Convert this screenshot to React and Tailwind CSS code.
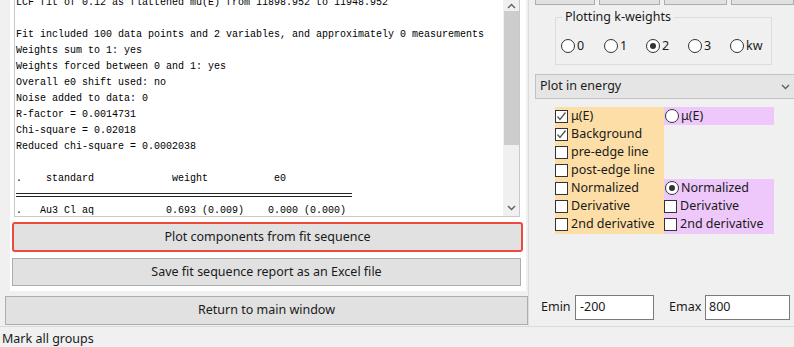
import React from 'react';

const ui = { fontFamily: '"Noto Sans", "Liberation Sans", sans-serif' };
const mono = { fontFamily: '"Liberation Mono", "DejaVu Sans Mono", monospace' };

const reportLines = [
  'LCF fit of 0.12 as flattened mu(E) from 11898.952 to 11948.952',
  '',
  'Fit included 100 data points and 2 variables, and approximately 0 measurements',
  'Weights sum to 1: yes',
  'Weights forced between 0 and 1: yes',
  'Overall e0 shift used: no',
  'Noise added to data: 0',
  'R-factor = 0.0014731',
  'Chi-square = 0.02018',
  'Reduced chi-square = 0.0002038',
  '',
  '.    standard             weight           e0',
];

function Chevron({ up = false }) {
  return (
    <svg width="9" height="6" viewBox="0 0 9 6" className="text-[#606060]">
      <path
        d={up ? 'M1 5 L4.5 1.5 L8 5' : 'M1 1 L4.5 4.5 L8 1'}
        fill="none"
        stroke="currentColor"
        strokeWidth="1.4"
      />
    </svg>
  );
}

function Radio({ checked, label }) {
  return (
    <div className="flex items-center gap-[2px]">
      <span className="flex h-[14px] w-[14px] items-center justify-center rounded-full border border-[#333] bg-white">
        {checked && <span className="h-[6px] w-[6px] rounded-full bg-[#333]" />}
      </span>
      <span>{label}</span>
    </div>
  );
}

function Check({ checked, label }) {
  return (
    <div className="flex h-[18px] items-center gap-[3px]">
      <span className="flex h-[13px] w-[13px] items-center justify-center border border-[#333] bg-white">
        {checked && (
          <svg width="11" height="11" viewBox="0 0 11 11">
            <path d="M1.5 5.5 L4 8.5 L9.5 1.5" fill="none" stroke="#555" strokeWidth="1.3" />
          </svg>
        )}
      </span>
      <span>{label}</span>
    </div>
  );
}

function ReportBox() {
  return (
    <div className="relative ml-[4px] flex h-[217px] w-[506px] border-x border-b border-[#c8c8c8] bg-white">
      <div className="flex-1 overflow-hidden text-[10px] leading-[16px] text-black" style={mono}>
        <div className="mt-[-5px] pl-[1px] whitespace-pre">
          {reportLines.map((l, i) => (
            <div key={i} className="h-[16px]">{l}</div>
          ))}
          <div className="flex h-[16px] flex-col justify-center gap-[2px]">
            <div className="h-px w-[336px] bg-[#222]" />
            <div className="h-px w-[336px] bg-[#222]" />
          </div>
          <div className="h-[16px]">{'.   Au3 Cl aq            0.693 (0.009)    0.000 (0.000)'}</div>
        </div>
      </div>
      <div className="flex w-[16px] flex-col items-center bg-[#f0f0f0]">
        <div className="flex h-[11px] items-center"><Chevron up /></div>
        <div className="h-[134px] w-[15px] bg-[#cdcdcd]" />
        <div className="flex-1" />
        <div className="flex h-[16px] items-center"><Chevron /></div>
      </div>
    </div>
  );
}

export default function App() {
  return (
    <div className="h-[347px] w-[794px] overflow-hidden bg-[#f0f0f0] text-[12.5px] text-[#1a1a1a]" style={ui}>
      <div className="flex h-[327px] border-b border-[#dadada]">
        {/* left column */}
        <div className="flex w-[530px] flex-col pl-[5px]">
          <div className="ml-[5px] flex h-[291px] w-[516px] flex-col bg-white">
            <ReportBox />
            <button className="ml-[2px] mt-[5px] h-[30px] w-[511px] rounded-[3px] border-2 border-[#ec4a3f] bg-[#e1e1e1] text-center">
              Plot components from fit sequence
            </button>
            <button className="ml-[2px] mt-[6px] h-[28px] w-[509px] border border-[#adadad] bg-[#e1e1e1] text-center">
              Save fit sequence report as an Excel file
            </button>
          </div>
          <button className="mt-[5px] h-[29px] w-[523px] border border-[#adadad] bg-[#e1e1e1] text-center">
            Return to main window
          </button>
        </div>

        {/* right column */}
        <div className="flex flex-1 flex-col border-l border-[#dcdcdc] pl-[6px]">
          <div className="flex h-[5px] gap-[4px]">
            <div className="w-[60px] border-x border-b border-[#adadad] bg-[#e1e1e1]" />
            <div className="w-[61px] border-x border-b border-[#adadad] bg-[#e1e1e1]" />
            <div className="w-[63px] border-x border-b border-[#adadad] bg-[#e1e1e1]" />
            <div className="w-[63px] border-x border-b border-[#adadad] bg-[#e1e1e1]" />
          </div>

          <div className="relative ml-[20px] mt-[12px] h-[48px] w-[217px] border border-[#dcdcdc]">
            <span className="absolute left-[6px] top-[-10px] bg-[#f0f0f0] px-[3px]">Plotting k-weights</span>
            <div className="mt-[19px] flex items-center pl-[5px]">
              <div className="w-[43px]"><Radio label="0" /></div>
              <div className="w-[42px]"><Radio label="1" /></div>
              <div className="w-[42px]"><Radio checked label="2" /></div>
              <div className="w-[42px]"><Radio label="3" /></div>
              <Radio label="kw" />
            </div>
          </div>

          <div className="mr-[-4px] mt-[9px] flex h-[25px] items-center justify-between border border-[#c2c2c2] bg-[#e5e5e5] pl-[4px] pr-[7px]">
            <span>Plot in energy</span>
            <Chevron />
          </div>

          <div className="ml-[20px] mt-[8px] flex w-[219px]">
            <div className="w-[109px] bg-[#fddea6] pb-[1px]">
              <Check checked label="μ(E)" />
              <Check checked label="Background" />
              <Check label="pre-edge line" />
              <Check label="post-edge line" />
              <Check label="Normalized" />
              <Check label="Derivative" />
              <Check label="2nd derivative" />
            </div>
            <div className="flex w-[110px] flex-col">
              <div className="flex h-[18px] items-center bg-[#efc8fb] pl-[1px]">
                <Radio label="μ(E)" />
              </div>
              <div className="h-[54px]" />
              <div className="bg-[#efc8fb] pb-[1px]">
                <div className="flex h-[18px] items-center pl-[1px]"><Radio checked label="Normalized" /></div>
                <Check label="Derivative" />
                <Check label="2nd derivative" />
              </div>
            </div>
          </div>

          <div className="mt-auto mb-[6px] flex items-center">
            <span className="ml-[6px] w-[34px]">Emin</span>
            <div className="flex h-[25px] w-[79px] items-center border border-[#7a7a7a] bg-white pl-[4px]">-200</div>
            <span className="ml-[15px] w-[36px]">Emax</span>
            <div className="flex h-[25px] w-[85px] items-center border border-[#7a7a7a] bg-white pl-[3px]">800</div>
          </div>
        </div>
      </div>
      <div className="pl-[2px] pt-[3px] leading-[18px]">Mark all groups</div>
    </div>
  );
}
